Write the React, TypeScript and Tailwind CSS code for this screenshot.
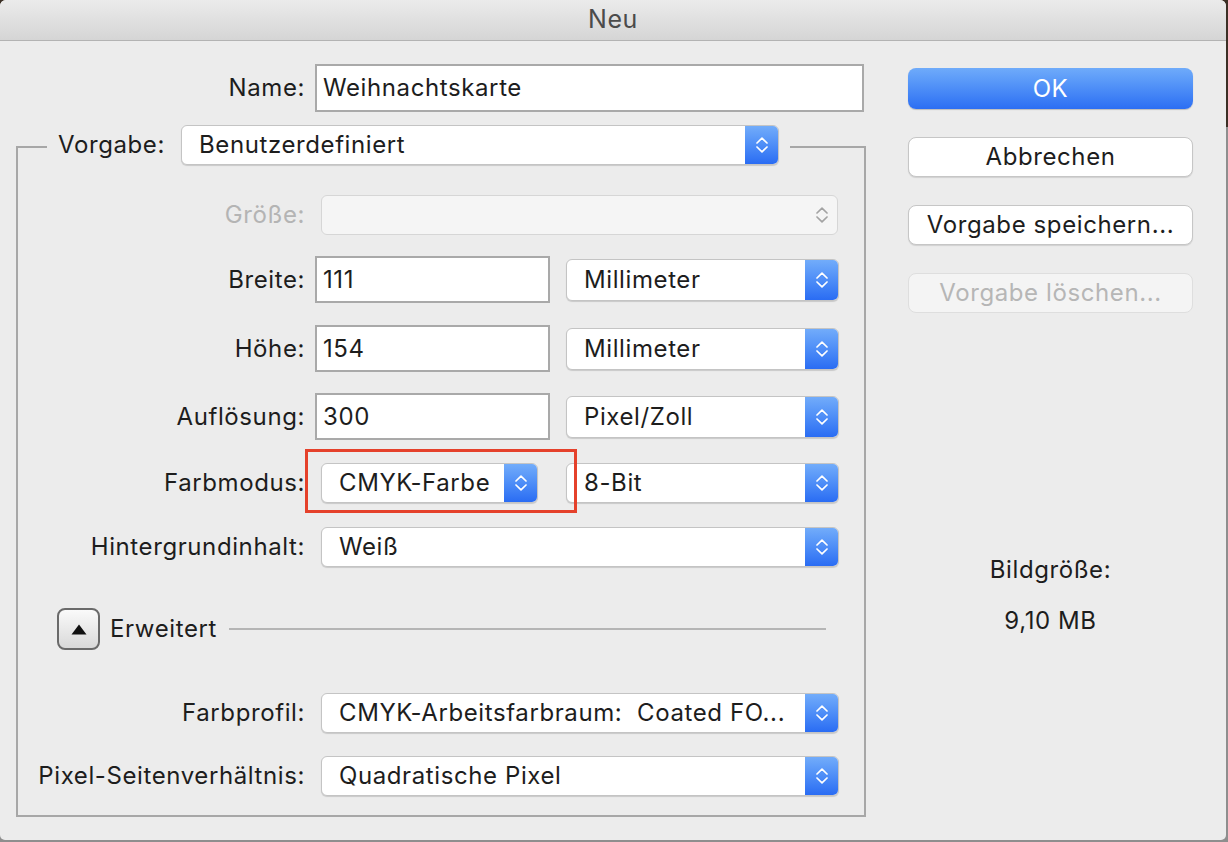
import React from "react";

const font = "font-['Inter','Noto_Sans',sans-serif] tracking-[0.6px]";

function Chevrons({ color }: { color: string }) {
  return (
    <svg width="12" height="16" viewBox="0 0 12 16" fill="none" stroke={color} strokeWidth="1.7" strokeLinecap="round" strokeLinejoin="round">
      <path d="M1 6 L6 1.2 L11 6" />
      <path d="M1 10 L6 14.8 L11 10" />
    </svg>
  );
}

function Select({ className, text, disabled }: { className: string; text?: string; disabled?: boolean }) {
  if (disabled) {
    return (
      <div className={`flex h-[40px] items-center justify-end rounded-[6px] border border-[#d6d6d6] bg-[#f5f5f5] pr-[9px] ${className}`}>
        <Chevrons color="#a3a3a3" />
      </div>
    );
  }
  return (
    <div className={`flex h-[40px] overflow-hidden rounded-[6px] border border-[#c4c4c4] bg-white shadow-[0_1px_1px_rgba(0,0,0,0.15)] ${className}`}>
      <div className="flex flex-1 items-center overflow-hidden whitespace-pre pl-[17px] text-[24px] text-[#1d1d1d]">{text}</div>
      <div className="flex w-[33px] items-center justify-center bg-gradient-to-b from-[#72acfa] to-[#2a6cf3]">
        <Chevrons color="white" />
      </div>
    </div>
  );
}

function Input({ className, value }: { className: string; value: string }) {
  return (
    <div className={`flex items-center border-2 border-[#a9a9a9] bg-white pl-[6px] text-[24px] text-[#1d1d1d] ${className}`}>{value}</div>
  );
}

function Label({ children, disabled }: { children: React.ReactNode; disabled?: boolean }) {
  return (
    <div className={`w-[287px] shrink-0 whitespace-nowrap text-right text-[24px] ${disabled ? "text-[#b4b4b4]" : "text-[#1d1d1d]"}`}>{children}</div>
  );
}

function Button({ children, variant }: { children: React.ReactNode; variant: "primary" | "normal" | "disabled" }) {
  const base = "flex items-center justify-center rounded-[8px] text-[24px] w-[285px] whitespace-nowrap";
  if (variant === "primary")
    return <div className={`${base} h-[41px] bg-gradient-to-b from-[#6fabfa] to-[#2c6ef3] text-white shadow-[0_1px_1px_rgba(0,0,0,0.2)]`}>{children}</div>;
  if (variant === "disabled")
    return <div className={`${base} h-[40px] border border-[#dedede] bg-[#f4f4f4] text-[#b6b6b6]`}>{children}</div>;
  return <div className={`${base} h-[40px] border border-[#c6c6c6] bg-white text-[#1d1d1d] shadow-[0_1px_1px_rgba(0,0,0,0.12)]`}>{children}</div>;
}

export default function App() {
  return (
    <div className={`flex h-[842px] w-[1228px] bg-[linear-gradient(to_bottom,#3b2f25_0,#3b2f25_127px,#8e8e8e_127px,#8e8e8e_100%)] ${font}`}>
      <div className="flex h-[840px] w-[1226px] flex-col overflow-hidden rounded-t-[6px] rounded-b-[5px] bg-[#ececec]">
        {/* Title bar */}
        <div className="flex h-[41px] shrink-0 items-center justify-center border-b border-[#b3b3b3] bg-gradient-to-b from-[#ebebeb] to-[#d5d5d5] text-[25px] text-[#4b4b4b]">
          Neu
        </div>

        <div className="flex">
          {/* Left column */}
          <div className="flex w-[866px] flex-col">
            {/* Name */}
            <div className="mt-[23px] flex items-center pl-[18px]">
              <Label>Name:</Label>
              <Input className="ml-[10px] h-[48px] w-[549px]" value="Weihnachtskarte" />
            </div>

            {/* Group */}
            <div className="ml-[16px] mt-[34px] flex w-[850px] flex-col border-2 border-[#a7a7a7] pb-[19px]">
              {/* Legend */}
              <div className="ml-[29px] mt-[-23px] flex w-max items-center bg-[#ececec] px-[11px]">
                <span className="w-[123px] text-[24px] text-[#1d1d1d]">Vorgabe:</span>
                <Select className="w-[598px]" text="Benutzerdefiniert" />
              </div>

              <div className="mt-[30px] flex items-center">
                <Label disabled>Größe:</Label>
                <Select className="ml-[16px] w-[517px]" disabled />
              </div>

              <div className="mt-[21px] flex items-center">
                <Label>Breite:</Label>
                <Input className="ml-[10px] h-[47px] w-[235px]" value="111" />
                <Select className="ml-[16px] h-[42px] w-[273px]" text="Millimeter" />
              </div>

              <div className="mt-[22px] flex items-center">
                <Label>Höhe:</Label>
                <Input className="ml-[10px] h-[47px] w-[235px]" value="154" />
                <Select className="ml-[16px] h-[42px] w-[273px]" text="Millimeter" />
              </div>

              <div className="mt-[21px] flex items-center">
                <Label>Auflösung:</Label>
                <Input className="ml-[10px] h-[47px] w-[235px]" value="300" />
                <Select className="ml-[16px] h-[42px] w-[273px]" text="Pixel/Zoll" />
              </div>

              <div className="relative mt-[23px] flex items-center">
                <Label>Farbmodus:</Label>
                <Select className="ml-[16px] w-[217px]" text="CMYK-Farbe" />
                <Select className="ml-[28px] w-[273px]" text="8-Bit" />
                <div className="pointer-events-none absolute left-[287px] top-[-14px] h-[64px] w-[272px] border-[3px] border-[#e5412b]" />
              </div>

              <div className="mt-[24px] flex items-center">
                <Label>Hintergrundinhalt:</Label>
                <Select className="ml-[16px] w-[518px]" text="Weiß" />
              </div>

              <div className="mt-[41px] flex items-center pl-[39px] pr-[38px]">
                <div className="flex h-[42px] w-[43px] items-center justify-center rounded-[8px] border-2 border-[#6a6a6a] bg-gradient-to-b from-[#fafafa] to-[#d9d9d9]">
                  <svg width="16" height="11" viewBox="0 0 16 11">
                    <path d="M8 0.5 L15.5 10.5 L0.5 10.5 Z" fill="#111" />
                  </svg>
                </div>
                <span className="ml-[10px] text-[24px] text-[#1d1d1d]">Erweitert</span>
                <div className="ml-[12px] h-[2px] flex-1 bg-[#b5b5b5]" />
              </div>

              <div className="mt-[43px] flex items-center">
                <Label>Farbprofil:</Label>
                <Select className="ml-[16px] w-[518px]" text="CMYK-Arbeitsfarbraum:  Coated FO..." />
              </div>

              <div className="mt-[23px] flex items-center">
                <Label>Pixel-Seitenverhältnis:</Label>
                <Select className="ml-[16px] w-[518px]" text="Quadratische Pixel" />
              </div>
            </div>
          </div>

          {/* Right column */}
          <div className="ml-[42px] flex w-[285px] flex-col">
            <div className="mt-[27px]">
              <Button variant="primary">OK</Button>
            </div>
            <div className="mt-[28px]">
              <Button variant="normal">Abbrechen</Button>
            </div>
            <div className="mt-[28px]">
              <Button variant="normal">Vorgabe speichern...</Button>
            </div>
            <div className="mt-[28px]">
              <Button variant="disabled">Vorgabe löschen...</Button>
            </div>
            <div className="mt-[242px] text-center text-[24px] leading-[30px] text-[#1d1d1d]">Bildgröße:</div>
            <div className="mt-[21px] text-center text-[24px] leading-[30px] text-[#1d1d1d]">9,10 MB</div>
          </div>
        </div>
      </div>
    </div>
  );
}
